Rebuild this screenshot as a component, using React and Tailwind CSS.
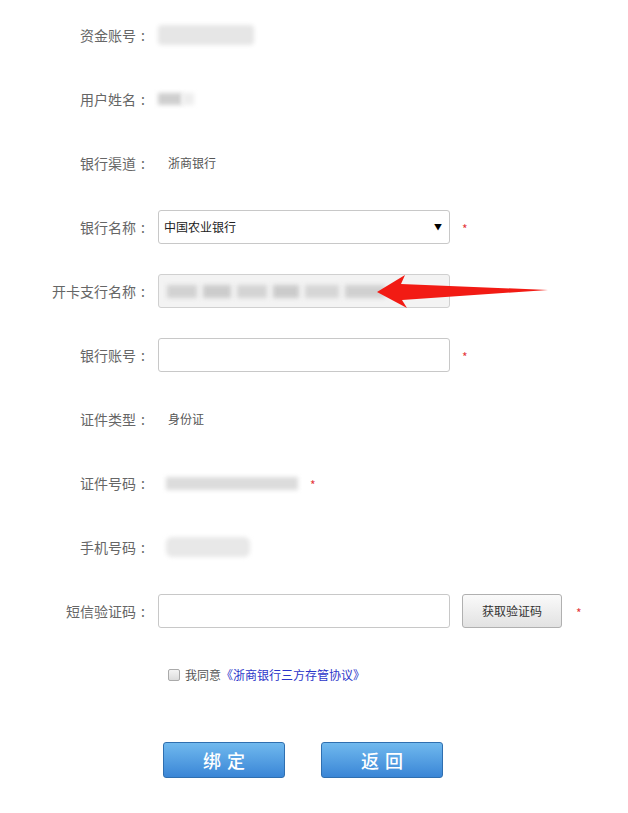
import React from 'react';

const font = { fontFamily: '"Noto Sans CJK SC", "Noto Sans", sans-serif' };

const Star = () => <span className="text-[12px] text-[#e4393c]">*</span>;

const Row = ({ label, children }) => (
  <div className="flex h-16 items-center">
    <div className="flex w-[150px] shrink-0 justify-end text-[14px] text-[#666]">
      <span>{label}</span>
      <span className="inline-block w-[14px] text-center">:</span>
    </div>
    <div className="ml-2 flex items-center">{children}</div>
  </div>
);

// blurred placeholder for masked personal info
const Masked = ({ className }) => <div className={`blur-[2px] ${className}`} />;

export default function App() {
  return (
    <div className="relative h-[813px] w-[628px] bg-white pt-[3px]" style={font}>
      <Row label="资金账号">
        <Masked className="h-5 w-[96px] rounded-sm bg-[#e6e6e6]" />
      </Row>
      <Row label="用户姓名">
        <div className="flex items-center">
          <Masked className="h-3 w-6 bg-[#cfcfcf]" />
          <Masked className="h-3 w-3 bg-[#eeeeee]" />
        </div>
      </Row>
      <Row label="银行渠道">
        <span className="pl-[10px] text-[12px] text-[#555]">浙商银行</span>
      </Row>
      <Row label="银行名称">
        <div className="flex h-[34px] w-[292px] items-center justify-between rounded-[3px] border border-[#c8c8c8] bg-white pl-[5px] pr-[7px]">
          <span className="text-[12px] text-[#222]">中国农业银行</span>
          <span className="text-[8px] text-black">▼</span>
        </div>
        <span className="ml-3">
          <Star />
        </span>
      </Row>
      <Row label="开卡支行名称">
        <div className="flex h-[34px] w-[292px] items-center rounded-[3px] border border-[#d0d0d0] bg-[#f3f3f3] pl-[8px]">
          <div className="flex gap-[6px]">
            <Masked className="h-[13px] w-[30px] bg-[#d2d2d2]" />
            <Masked className="h-[13px] w-[28px] bg-[#cccccc]" />
            <Masked className="h-[13px] w-[30px] bg-[#d4d4d4]" />
            <Masked className="h-[13px] w-[26px] bg-[#cbcbcb]" />
            <Masked className="h-[13px] w-[34px] bg-[#d6d6d6]" />
            <Masked className="h-[13px] w-[40px] bg-[#d0d0d0]" />
          </div>
        </div>
      </Row>
      <Row label="银行账号">
        <div className="h-[34px] w-[292px] rounded-[3px] border border-[#c8c8c8] bg-white" />
        <span className="ml-3">
          <Star />
        </span>
      </Row>
      <Row label="证件类型">
        <span className="pl-[10px] text-[12px] text-[#555]">身份证</span>
      </Row>
      <Row label="证件号码">
        <Masked className="ml-2 h-[13px] w-[132px] bg-[#dcdcdc]" />
        <span className="ml-3">
          <Star />
        </span>
      </Row>
      <Row label="手机号码">
        <Masked className="ml-2 h-5 w-[84px] rounded-md bg-[#e8e8e8]" />
      </Row>
      <Row label="短信验证码">
        <div className="h-[34px] w-[292px] rounded-[3px] border border-[#c8c8c8] bg-white" />
        <button className="ml-3 h-[34px] w-[100px] rounded-[3px] border border-[#b0b0b0] bg-gradient-to-b from-[#fafafa] to-[#e2e2e2] text-[12px] text-[#333]">
          获取验证码
        </button>
        <span className="ml-[14px]">
          <Star />
        </span>
      </Row>

      <div className="flex h-16 items-center pl-[168px]">
        <span className="h-[12px] w-[12px] rounded-[2px] border border-[#aaa] bg-gradient-to-b from-[#f4f4f4] to-[#dcdcdc]" />
        <span className="ml-[5px] text-[12px] text-[#555]">我同意</span>
        <a className="text-[12px] text-[#2b35c9]">《浙商银行三方存管协议》</a>
      </div>

      <div className="mt-[35px] flex gap-9 pl-[163px]">
        <button className="h-9 w-[122px] rounded-[3px] border border-[#2f6fb0] bg-gradient-to-b from-[#70b9ee] to-[#3a86d6] pl-[6px] text-[18px] font-medium tracking-[6px] text-white">
          绑定
        </button>
        <button className="h-9 w-[122px] rounded-[3px] border border-[#2f6fb0] bg-gradient-to-b from-[#70b9ee] to-[#3a86d6] pl-[6px] text-[18px] font-medium tracking-[6px] text-white">
          返回
        </button>
      </div>

      {/* annotation arrow drawn over the screenshot */}
      <svg className="absolute left-[370px] top-[268px]" width="185" height="46" viewBox="0 0 185 46">
        <polygon points="7,24 35,7 31,16 178,22 32,32 37,40" fill="#f21b14" />
      </svg>
    </div>
  );
}
